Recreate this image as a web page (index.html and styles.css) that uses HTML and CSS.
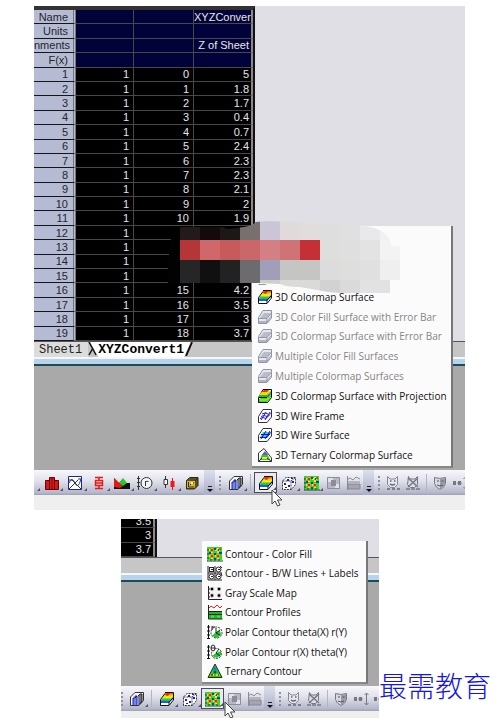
FILE: index.html
```
<!DOCTYPE html>
<html lang="en">
<head>
<meta charset="utf-8">
<title>Worksheet plot menus</title>
<link rel="stylesheet" href="styles.css">
</head>
<body>
<svg class="sprite" aria-hidden="true">
  <defs>
    <linearGradient id="rainbow" x1="0" y1="0" x2="0" y2="1">
      <stop offset="0" stop-color="#f04a10"/><stop offset=".3" stop-color="#ffc800"/><stop offset=".55" stop-color="#f4f400"/><stop offset=".8" stop-color="#28d428"/><stop offset="1" stop-color="#10b0a8"/>
    </linearGradient>
  </defs>
  <symbol id="i-surface" viewBox="0 0 16 16"><path d="M1 9 6 2h9v7l-5 5H1z" fill="#fff"/><path d="M2 9l4-7h8v4l-4 4H2z" fill="url(#rainbow)"/><path d="M6 4l2-2h3L9 5z" fill="#e82810"/><path d="M2 10h8l4-4v2l-4 4H2z" fill="#2058e8"/><path d="M1.500 8.500 6 2.500M6 1.500h8.500v7.500L10 14.500H1.500v-6" fill="none" stroke="#111"/><path d="M10 14v-3L14 7" fill="none" stroke="#111"/></symbol>
  <symbol id="i-surface-off" viewBox="0 0 16 16"><path d="M1.500 8.500 6 1.500h8.500V9L10 14.500H1.500z" fill="#e6e7ee" stroke="#9194a0"/><path d="M3 9l4-5h7l-4 5z" fill="#b9bdca"/><path d="M2 12h8l4-5v2l-4 5H2z" fill="#b0b4c2"/><path d="M2 9.500h8l4-5M10 10v4" fill="none" stroke="#9296a4"/></symbol>
  <symbol id="i-projection" viewBox="0 0 16 16"><path d="M1.500 9.500 6 1.500h8.500v8L10.500 14.500h-9z" fill="#fff" stroke="#000"/><path d="M2 7l4-4.500h8L10 7z" fill="#f8d800"/><path d="M4 4l3-2h5l-2 2z" fill="#f03010"/><path d="M2 7h8l4-4v2l-4 4H2z" fill="#20c030"/><path d="M2 11l2-1h6l4-3v2l-4 5H2z" fill="#28e028"/><path d="M3 12h6l3-2" stroke="#f0e000" fill="none"/><path d="M2 9.500h8l4-4" stroke="#000" fill="none"/></symbol>
  <symbol id="i-wire" viewBox="0 0 16 16"><path d="M1.500 8.500 6 1.500h8.500V9L10 14.500H1.500z" fill="#fff" stroke="#333"/><path d="M3 10.500l3-1 3 1 4-4M4 8.500l3-1 3 1 4-4M5 6l3-1 3 1M4 12l5-8M8 12l5-8" fill="none" stroke="#2820e0"/></symbol>
  <symbol id="i-wiresurf" viewBox="0 0 16 16"><path d="M1.500 8.500 6 1.500h8.500V9L10 14.500H1.500z" fill="#fff" stroke="#333"/><path d="M2.500 11 6 5h8l-4 6z" fill="#48c0e8"/><path d="M3 10.500h7l3.500-5M4 7.500h9M4 12l5-8M8 12l5-8" fill="none" stroke="#1018b0"/></symbol>
  <symbol id="i-ternary3d" viewBox="0 0 16 16"><path d="M1.500 14.500V6L7 1.500 14.500 11v3.500z" fill="#fff" stroke="#333"/><path d="M3 13q1-6 5-8 3 2 5 8z" fill="#22d030"/><path d="M5 8l3-4 3 4z" fill="#9040e0"/><path d="M5 10h5l2 2H4z" fill="#e8e820"/><path d="M1.500 14.500 5 11M14.500 14.500 10 11" stroke="#222" fill="none"/></symbol>
  <symbol id="i-scatter" viewBox="0 0 16 16"><path d="M1.500 6 5 2.500h9.500v7L10.500 14.500h-9z" fill="#fff"/><path d="M1.500 14.500V6L5 2.500h9.500v7L10.500 14.500zM1.500 6h8.500v8M10 6l4-3" fill="none" stroke="#333" stroke-dasharray="2 1"/><path d="M3 8h2v2H3zM7 10h2v2H7zM6 4h2v2H6zM11 6h2v2h-2zM10 3h2v1h-2zM4 12h2v1H4z" fill="#1818e0"/></symbol>
  <symbol id="i-bars3d" viewBox="0 0 16 16"><path d="M1.500 6 6 1.500h8.500v8L10 14.500H1.500z" fill="#f4f4fb" stroke="#333"/><path d="M4 14V7h2V5h2v9M10 14V5l2-2v8" fill="#7184f0" stroke="#1822b4"/><path d="M6 7l2-2M9 5l2-2h2v7l-2 3" fill="#777" stroke="#222"/></symbol>
  <symbol id="i-contour" viewBox="0 0 16 16"><path d="M1 1h14v13H1z" fill="#28e020"/><path d="M0 1v14h16M0 4h2M0 8h2M0 12h2M4 15v-2M8 15v-2M12 15v-2" stroke="#174d17" fill="none"/><path d="M2 4h12M2 10h12M5 2v12M11 2v12" stroke="#f0e820" stroke-width="2" stroke-dasharray="2 1"/><g fill="#f02018"><circle cx="5" cy="4" r="1.600"/><circle cx="11" cy="10" r="1.600"/><circle cx="5" cy="10" r="1.600"/><circle cx="13" cy="3" r="1"/></g><path d="M8 2v2M8 7v2M8 12v2M2 7h2M12 7h3M11 4h1" stroke="#1838e0" stroke-width="2"/></symbol>
  <symbol id="i-bw" viewBox="0 0 16 16"><path d="M1 1h14v13H1z" fill="#fff"/><path d="M1 1v14h14M1 8h14M8 1v14" stroke="#222" fill="none"/><g fill="none" stroke="#222"><rect x="2.500" y="2.500" width="4" height="4"/><circle cx="11.500" cy="4.500" r="2.500"/><circle cx="4.500" cy="11.500" r="2.500"/><circle cx="11.500" cy="11.500" r="2.500"/><path d="M4 4.500h2M11 4.500h2M4 11.500h2M11 11.500h2M13 1l2 2M14 8l1 3"/></g></symbol>
  <symbol id="i-gray" viewBox="0 0 16 16"><path d="M1 2h14v12H1z" fill="#f4f4f4"/><path d="M1.500 1v13.500H15M1 4h2M1 8h2M1 12h2M4 14v1M8 14v1M12 14v1" stroke="#222" fill="none"/><g fill="#999"><circle cx="5" cy="4" r="2"/><circle cx="12" cy="4" r="2"/><circle cx="5" cy="10.500" r="2"/><circle cx="12" cy="10.500" r="2"/></g><path d="M4 4h2M11 4h2M4 10.500h2M11 10.500h2" stroke="#000" stroke-width="2"/></symbol>
  <symbol id="i-profiles" viewBox="0 0 16 16"><path d="M1 5l3-3 3 2 3-3 3 3 2-2" stroke="#e82020" fill="none"/><path d="M1 7h14v8H1z" fill="#20b828"/><path d="M1.500 1v14h14M1 7.500h14M2 10.500h13" stroke="#222" fill="none"/><path d="M4 12.500h3M10 12.500h3" stroke="#38f038" stroke-width="2"/></symbol>
  <symbol id="i-polar1" viewBox="0 0 16 16"><path d="M1.500 1v14M0 3h3M0 7h3M0 11h3M0 14.500h3" stroke="#111" fill="none"/><circle cx="9.500" cy="8.500" r="5.500" fill="#fff" stroke="#333" stroke-dasharray="2 1"/><path d="M9 8l4-2 1 5-4 3-5-2z" fill="#20c82c"/><path d="M5 2v4M5 3h3M9 4v5l4-3M9 9l4 2" stroke="#222" fill="none"/></symbol>
  <symbol id="i-polar2" viewBox="0 0 16 16"><path d="M1.500 1v14M0 3h3M0 7h3M0 11h3M0 14.500h3" stroke="#111" fill="none"/><circle cx="9.500" cy="9.500" r="5" fill="#fff" stroke="#333" stroke-dasharray="2 1"/><path d="M9 9l5-2v4l-4 3-5-2z" fill="#20c82c"/><ellipse cx="6" cy="4" rx="2" ry="3" fill="#fff" stroke="#222"/><path d="M4 4h4M9 9l3-4M9 9l4 3" stroke="#222" fill="none"/></symbol>
  <symbol id="i-ternary" viewBox="0 0 16 16"><path d="M8 1 1 14.500h14z" fill="#24cf28" stroke="#143a14"/><path d="M8 3l2 4H6z" fill="#2c70e8"/><path d="M4 11h3v2H3zM9 11h3l1 2H9z" fill="#f0d010"/><circle cx="8" cy="9" r="1.500" fill="#1838d0"/><path d="M4 12h2M11 12h1" stroke="#e02818" stroke-width="2"/></symbol>
  <symbol id="i-columns" viewBox="0 0 16 16"><path d="M1.500 5.500h4v9h-4zM5.500 2.500h5v12h-5zM10.500 5.500h4v9h-4z" fill="#d81818" stroke="#5c0606"/><path d="M8 3v11" stroke="#8c0808"/></symbol>
  <symbol id="i-curve" viewBox="0 0 16 16"><path d="M1.500 1.500h13v13h-13z" fill="#fff" stroke="#1c2890"/><path d="M2 8q3-7 6 0t6-4" fill="none" stroke="#2030e0"/><path d="M2 14 11 5M5 5l9 9M2 5h3M11 4h3" stroke="#333" fill="none"/></symbol>
  <symbol id="i-box" viewBox="0 0 16 16"><path d="M4 2.500h8M8 2v3M4.500 5.500h7v5h-7zM4 8h8M8 10v4M4 13.500h8" fill="#ffd8d8" stroke="#e01c1c" stroke-width="1.500"/></symbol>
  <symbol id="i-area" viewBox="0 0 16 16"><path d="M0 14V3l5 5 3-3 3 3h5v6z" fill="#111"/><path d="M0 3l5 5 4 3-3 2-6-1z" fill="#e81818"/><path d="M5 8l4-5 4 5-4 3z" fill="#28c828"/></symbol>
  <symbol id="i-polar-r" viewBox="0 0 16 16"><path d="M1.500 1v14M0 3.500h3M0 7.500h3M0 11.500h3" stroke="#333" fill="none"/><circle cx="9.500" cy="8" r="5.500" fill="#f4f4fb" stroke="#333"/><path d="M8.500 11V6M8.500 7.500q1-2 3-1" stroke="#333" fill="none"/></symbol>
  <symbol id="i-candle" viewBox="0 0 16 16"><path d="M4.500 1v3M4.500 9v4M3 4.500h3.500v5H3z" fill="#fff" stroke="#333"/><path d="M11.500 3v12" stroke="#e01818"/><path d="M9.500 6h4v6h-4z" fill="#f01818"/></symbol>
  <symbol id="i-template" viewBox="0 0 16 16"><path d="M2.500 5.500 6 2.500h8v8l-3.500 3.500h-8z" fill="#58502c" stroke="#2c2814"/><path d="M3 6h8v7H3z" fill="#d8b830"/><path d="M11 6l3-3M4.500 7v5M4.500 12h6M6 10l2-2h2" stroke="#382c08" fill="none"/><path d="M7 7h2v2H7z" fill="#fff080"/></symbol>
  <symbol id="i-image-off" viewBox="0 0 16 16"><path d="M2.500 2.500h12v11h-12z" fill="#b8b9c4" stroke="#8c8d98"/><path d="M3 3h5v4H3zM10 9h4v4h-4z" fill="#e2e3ea"/><path d="M6 5h5v6H6z" fill="#8c8d98"/></symbol>
  <symbol id="i-profile-off" viewBox="0 0 16 16"><path d="M2 5l3-2 3 2 3-3 4 2M2 7h13M2.500 1v14" stroke="#8a8b96" fill="none"/><path d="M3 9h12v5H3z" fill="#a4a5b0" stroke="#858691"/></symbol>
  <symbol id="i-mask" viewBox="0 0 16 16"><path d="M2.500 1.500 5 4h5l2.500-2.500v8l-3 3h-4l-3-3z" fill="#e6e7ee" stroke="#888995"/><path d="M5 6h1.500M9 6h1.500M5 9q2.500 2 5 0M2 14h3M7 14h3M12 14h3" stroke="#666773" fill="none" stroke-width="1.500"/></symbol>
  <symbol id="i-unmask" viewBox="0 0 16 16"><path d="M3.500 1.500 5 4h5l2.500-2.500v8l-3 3h-4l-3-3z" fill="#dcdde5" stroke="#777884"/><path d="M3 3l10 9M13 3 3 12M1 14h4M6 14h4M11 14h4" stroke="#777884" fill="none" stroke-width="1.500"/></symbol>
  <symbol id="i-shield" viewBox="0 0 16 16"><path d="M2.500 2.500q5 2 11 0v6q-1 4-5.500 6-4.500-2-5.500-6z" fill="#d6d7df" stroke="#777884"/><path d="M8 3.500q3 0 5-.5v6q-1 3-5 5z" fill="#9a9ba7"/><path d="M5 6h2M9.500 6h2M5 10q3 2 6 0" stroke="#555662" fill="none"/></symbol>
  <symbol id="i-nodes" viewBox="0 0 16 16"><path d="M2 8h9" stroke="#888995" stroke-dasharray="2 1"/><path d="M1 6h3v4H1zM6 6h3v4H6z" fill="#777884"/><path d="M13.500 2v12M11.500 4l2-2 2 2M11.500 12l2 2 2-2" stroke="#777884" fill="none"/></symbol>
  <symbol id="i-cursor" viewBox="0 0 12 18"><path d="M1 1v14l3-3 2.500 5 2.500-1-2.500-5H11z" fill="#fff" stroke="#444"/></symbol>
</svg>

<main class="page">
  <section class="shot shot-main">
    <div class="sheet">
      <table class="grid">
        <colgroup><col class="c-head"><col class="c-a"><col class="c-b"><col class="c-c"></colgroup>
        <tbody>
        <tr class="meta"><th scope="row">Name</th><td></td><td></td><td>XYZConver</td></tr>
        <tr class="meta"><th scope="row">Units</th><td></td><td></td><td></td></tr>
        <tr class="meta"><th scope="row">nments</th><td></td><td></td><td>Z of Sheet</td></tr>
        <tr class="meta"><th scope="row">F(x)</th><td></td><td></td><td></td></tr>
        <tr><th scope="row">1</th><td>1</td><td>0</td><td>5</td></tr>
        <tr><th scope="row">2</th><td>1</td><td>1</td><td>1.8</td></tr>
        <tr><th scope="row">3</th><td>1</td><td>2</td><td>1.7</td></tr>
        <tr><th scope="row">4</th><td>1</td><td>3</td><td>0.4</td></tr>
        <tr><th scope="row">5</th><td>1</td><td>4</td><td>0.7</td></tr>
        <tr><th scope="row">6</th><td>1</td><td>5</td><td>2.4</td></tr>
        <tr><th scope="row">7</th><td>1</td><td>6</td><td>2.3</td></tr>
        <tr><th scope="row">8</th><td>1</td><td>7</td><td>2.3</td></tr>
        <tr><th scope="row">9</th><td>1</td><td>8</td><td>2.1</td></tr>
        <tr><th scope="row">10</th><td>1</td><td>9</td><td>2</td></tr>
        <tr><th scope="row">11</th><td>1</td><td>10</td><td>1.9</td></tr>
        <tr><th scope="row">12</th><td>1</td><td></td><td></td></tr>
        <tr><th scope="row">13</th><td>1</td><td></td><td></td></tr>
        <tr><th scope="row">14</th><td>1</td><td></td><td></td></tr>
        <tr><th scope="row">15</th><td>1</td><td></td><td></td></tr>
        <tr><th scope="row">16</th><td>1</td><td>15</td><td>4.2</td></tr>
        <tr><th scope="row">17</th><td>1</td><td>16</td><td>3.5</td></tr>
        <tr><th scope="row">18</th><td>1</td><td>17</td><td>3</td></tr>
        <tr><th scope="row">19</th><td>1</td><td>18</td><td>3.7</td></tr>
        </tbody>
      </table>
    </div>
    <div class="tabs">
      <button class="tab">Sheet1</button>
      <svg class="slant" viewBox="0 0 10 14"><path d="M2 0h8v14z" fill="#fff"/><path d="M1 0l7 13M5 6l-4 7" stroke="#111" fill="none" stroke-width="1.500"/></svg>
      <button class="tab active">XYZConvert1</button>
      <svg class="slant" viewBox="0 0 10 14"><path d="M0 0h9L3 14H0z" fill="#fff"/><path d="M8 0 2 14" stroke="#111" fill="none" stroke-width="2"/></svg>
    </div>
    <div class="band"></div>
    <div class="workspace"></div>
    <div class="toolbar">
      <span class="stub"></span>
      <div class="group">
        <button class="tool drop" aria-label="Column"><svg><use href="#i-columns"/></svg></button>
        <button class="tool drop" aria-label="Curve"><svg><use href="#i-curve"/></svg></button>
        <button class="tool drop" aria-label="Box"><svg><use href="#i-box"/></svg></button>
        <button class="tool drop" aria-label="Area"><svg><use href="#i-area"/></svg></button>
        <button class="tool drop" aria-label="Polar"><svg><use href="#i-polar-r"/></svg></button>
        <button class="tool drop" aria-label="Stock"><svg><use href="#i-candle"/></svg></button>
        <button class="tool" aria-label="Template"><svg><use href="#i-template"/></svg></button>
      </div>
      <button class="cap" aria-label="More"></button>
      <span class="grip"></span>
      <button class="tool drop" aria-label="3D bars"><svg><use href="#i-bars3d"/></svg></button>
      <span class="sep"></span>
      <button class="tool drop selected" aria-label="3D surface"><svg><use href="#i-surface"/></svg></button>
      <button class="tool drop" aria-label="3D scatter"><svg><use href="#i-scatter"/></svg></button>
      <button class="tool drop" aria-label="Contour"><svg><use href="#i-contour"/></svg></button>
      <button class="tool narrow" aria-label="Image"><svg><use href="#i-image-off"/></svg></button>
      <button class="tool narrow" aria-label="Profile"><svg><use href="#i-profile-off"/></svg></button>
      <button class="cap" aria-label="More"></button>
      <span class="grip"></span>
      <button class="tool narrow" aria-label="Mask"><svg><use href="#i-mask"/></svg></button>
      <button class="tool narrow" aria-label="Unmask"><svg><use href="#i-unmask"/></svg></button>
      <span class="sep"></span>
      <button class="tool narrow" aria-label="Swap mask"><svg><use href="#i-shield"/></svg></button>
      <button class="tool narrow" aria-label="Nodes"><svg><use href="#i-nodes"/></svg></button>
    </div>
    <div class="status"></div>

    <ul class="menu menu-surface">
      <li><button><svg><use href="#i-surface"/></svg>3D Colormap Surface</button></li>
      <li><button disabled><svg><use href="#i-surface-off"/></svg>3D Color Fill Surface with Error Bar</button></li>
      <li><button disabled><svg><use href="#i-surface-off"/></svg>3D Colormap Surface with Error Bar</button></li>
      <li><button disabled><svg><use href="#i-surface-off"/></svg>Multiple Color Fill Surfaces</button></li>
      <li><button disabled><svg><use href="#i-surface-off"/></svg>Multiple Colormap Surfaces</button></li>
      <li><button><svg><use href="#i-projection"/></svg>3D Colormap Surface with Projection</button></li>
      <li><button><svg><use href="#i-wire"/></svg>3D Wire Frame</button></li>
      <li><button><svg><use href="#i-wiresurf"/></svg>3D Wire Surface</button></li>
      <li><button><svg><use href="#i-ternary3d"/></svg>3D Ternary Colormap Surface</button></li>
    </ul>

    <svg class="mosaic" viewBox="168 220 234 76" aria-hidden="true">
      <clipPath id="blob"><path d="M168 283V262L171 238Q173 228 182 227H222L228 229 244 227Q252 226 256 222L268 221 350 225Q382 225 390 240L391 246H400V280H390V293H340L328 292 300 287Q286 287 280 284L258 283H250V283z"/></clipPath>
      <g clip-path="url(#blob)" shape-rendering="crispEdges">
        <path d="M168 220h12v76h-12z" fill="#020202"/>
        <path d="M180 220h20v20h-20z" fill="#231a1c"/><path d="M200 220h20v20h-20z" fill="#120a0c"/><path d="M220 220h20v20h-20z" fill="#1c1818"/><path d="M240 220h20v20h-20z" fill="#77706f"/><path d="M260 220h20v20h-20z" fill="#cbc5d8"/><path d="M280 220h20v20h-20z" fill="#e0dada"/><path d="M300 220h20v20h-20z" fill="#e2dddd"/><path d="M320 220h20v20h-20z" fill="#dedede"/><path d="M340 220h20v20h-20z" fill="#e0e0e0"/><path d="M360 220h20v20h-20z" fill="#e9e9eb"/><path d="M380 220h20v20h-20z" fill="#f1f1f1"/>
        <path d="M180 240h20v20h-20z" fill="#b53638"/><path d="M200 240h20v20h-20z" fill="#d0676b"/><path d="M220 240h20v20h-20z" fill="#c75a5a"/><path d="M240 240h20v20h-20z" fill="#cb666a"/><path d="M260 240h20v20h-20z" fill="#d37f83"/><path d="M280 240h20v20h-20z" fill="#cf7377"/><path d="M300 240h20v20h-20z" fill="#c43036"/><path d="M320 240h20v20h-20z" fill="#dedfdd"/><path d="M340 240h20v20h-20z" fill="#dfdfdf"/><path d="M360 240h20v20h-20z" fill="#e3e3e3"/><path d="M380 240h20v20h-20z" fill="#f3f3f3"/>
        <path d="M180 260h20v24h-20z" fill="#262626"/><path d="M200 260h20v24h-20z" fill="#101010"/><path d="M220 260h20v24h-20z" fill="#222"/><path d="M240 260h20v24h-20z" fill="#6c6b6e"/><path d="M260 260h20v20h-20z" fill="#a19eb9"/><path d="M280 260h40v20h-40z" fill="#c5c5c4"/><path d="M320 260h20v20h-20z" fill="#dcdcdc"/><path d="M340 260h20v20h-20z" fill="#dededd"/><path d="M360 260h20v20h-20z" fill="#e0e0e0"/><path d="M380 260h20v20h-20z" fill="#efefef"/>
        <path d="M260 280h20v16h-20z" fill="#ccd0c6"/><path d="M280 280h40v16h-40z" fill="#dadada"/><path d="M320 280h20v16h-20z" fill="#d2d2d2"/><path d="M340 280h20v16h-20z" fill="#dadada"/><path d="M360 280h40v16h-40z" fill="#e2e2e2"/>
      </g>
      <path d="M259 284h8l-2 1h-7z" fill="#8f93c0"/>
    </svg>
    <svg class="cursor cursor-main"><use href="#i-cursor"/></svg>
  </section>

  <div class="lower">
    <section class="shot shot-contour">
      <div class="sheet short">
        <table class="grid tail">
          <tbody>
          <tr><td>3.5</td></tr>
          <tr><td>3</td></tr>
          <tr><td>3.7</td></tr>
          </tbody>
        </table>
      </div>
      <div class="tabs"></div>
      <div class="band"></div>
      <div class="workspace"></div>
      <div class="toolbar">
        <span class="grip slim"></span>
        <button class="tool drop" aria-label="3D bars"><svg><use href="#i-bars3d"/></svg></button>
        <span class="sep"></span>
        <button class="tool drop" aria-label="3D surface"><svg><use href="#i-surface"/></svg></button>
        <button class="tool drop" aria-label="3D scatter"><svg><use href="#i-scatter"/></svg></button>
        <button class="tool drop selected" aria-label="Contour"><svg><use href="#i-contour"/></svg></button>
        <button class="tool narrow" aria-label="Image"><svg><use href="#i-image-off"/></svg></button>
        <button class="tool narrow" aria-label="Profile"><svg><use href="#i-profile-off"/></svg></button>
        <button class="cap" aria-label="More"></button>
        <span class="grip"></span>
        <button class="tool narrow" aria-label="Mask"><svg><use href="#i-mask"/></svg></button>
        <button class="tool narrow" aria-label="Unmask"><svg><use href="#i-unmask"/></svg></button>
        <span class="sep"></span>
        <button class="tool narrow" aria-label="Swap mask"><svg><use href="#i-shield"/></svg></button>
        <button class="tool narrow" aria-label="Nodes"><svg><use href="#i-nodes"/></svg></button>
        <button class="tool narrow" aria-label="Nodes"><svg><use href="#i-nodes"/></svg></button>
      </div>
      <div class="status"></div>

      <ul class="menu menu-contour">
        <li><button><svg><use href="#i-contour"/></svg>Contour - Color Fill</button></li>
        <li><button><svg><use href="#i-bw"/></svg>Contour - B/W Lines + Labels</button></li>
        <li><button><svg><use href="#i-gray"/></svg>Gray Scale Map</button></li>
        <li><button><svg><use href="#i-profiles"/></svg>Contour Profiles</button></li>
        <li><button><svg><use href="#i-polar1"/></svg>Polar Contour theta(X) r(Y)</button></li>
        <li><button><svg><use href="#i-polar2"/></svg>Polar Contour r(X) theta(Y)</button></li>
        <li><button><svg><use href="#i-ternary"/></svg>Ternary Contour</button></li>
      </ul>
      <svg class="cursor cursor-contour"><use href="#i-cursor"/></svg>
    </section>
    <p class="brand" lang="zh-CN">最需教育</p>
  </div>
</main>
</body>
</html>
```
FILE: styles.css
```
* { box-sizing: border-box; }
body { margin: 0; background: #fff; font-family: "Liberation Sans", Arial, sans-serif; }
button { margin: 0; padding: 0; border: 0; background: none; font: inherit; color: inherit; }
.sprite { position: absolute; width: 0; height: 0; }

.page { padding: 6px 0 0; }
.shot { position: relative; display: flex; flex-direction: column; }
.shot-main { margin: 0 36px 0 34px; }
.lower { display: grid; grid-template-columns: 121px minmax(0, 258px) auto; margin-top: 9px; }
.shot-contour { grid-column: 2; }

/* worksheet */
.sheet { display: flex; align-items: flex-end; height: 336px; background: #e0dfe5; border-bottom: 1px solid #555; }
.sheet.short { height: 39px; overflow: hidden; }
.grid {
  table-layout: fixed; border-collapse: separate; border-spacing: 0;
  width: 221px; height: 335px; background: #000;
  border-top: 4px solid #333; border-right: 2px solid #111;
  font-size: 11px; line-height: 12px; color: #e6e6e6;
}
.c-head { width: 42px; }
.c-a { width: 58px; }
.c-b { width: 60px; }
.grid th, .grid td { padding: 0; text-align: right; font-weight: 400; white-space: nowrap; border-bottom: 1px solid #484848; }
.grid td { border-right: 1px solid #484848; padding-right: 4px; }
.grid td:last-child { border-right: 2px solid #8a8a8a; padding-right: 2px; }
.grid th { background: #b4bbd3; color: #26262e; padding-right: 5px; border-bottom-color: #15151c; border-right: 3px double #777; }
.grid .meta td { background: #02023a; }
.grid.tail { flex: none; width: 36px; height: 43px; border-top: 0; }

/* sheet tabs */
.tabs { display: flex; height: 15px; background: #c6c6c6; font-family: "Liberation Mono", "Courier New", monospace; line-height: 14px; }
.tab { padding: 0 6px 0 5px; font-size: 12px; color: #222; background: #dcdcdc; }
.tab.active { padding: 0; font-size: 13px; font-weight: 700; color: #000; background: #fff; }
.slant { width: 10px; height: 14px; flex: none; }
.band { height: 9px; background: #b7d4ec; border-top: 2px solid #f4f8fb; border-bottom: 2px solid #1c4a56; }
.workspace { height: 104px; background: #a9a9a9; }

/* toolbar */
.toolbar {
  display: flex; align-items: center; height: 25px; overflow: hidden;
  background: linear-gradient(#f7f7fb, #dfe0ea 45%, #b6b8cc 90%, #9fa1b5);
}
.status { height: 15px; background: #efefef; }
.shot-contour .status { height: 7px; }
.stub { flex: none; width: 6px; }
.group { display: flex; flex: none; width: 164px; }
.group .tool { flex: 1; }
.tool { position: relative; flex: none; display: flex; align-items: center; justify-content: center; width: 23px; height: 21px; }
.tool.narrow { width: 20px; }
.tool svg { width: 16px; height: 16px; flex: none; }
.tool.selected { border: 1px solid #4c4c58; background: #e9e9f0; }
.tool.drop::after, .stub::after {
  content: ""; position: absolute; right: 0; bottom: 2px;
  border-left: 3px solid transparent; border-bottom: 3px solid #555;
}
.stub { position: relative; height: 21px; }
.stub::after { right: 0; }
.cap {
  flex: none; width: 11px; height: 25px; border-radius: 0 0 4px 0;
  background: linear-gradient(#dcdfec, #a9adc6); position: relative;
}
.cap::before { content: ""; position: absolute; left: 4px; right: 3px; bottom: 8px; border-top: 1px solid #222; }
.cap::after { content: ""; position: absolute; left: 3px; bottom: 3px; border: 3px solid transparent; border-top-color: #111; border-bottom: 0; }
.grip { flex: none; width: 2px; height: 14px; margin: 0 3px 0 4px; background: repeating-linear-gradient(#8e90a2 0 2px, transparent 2px 4px); }
.grip.slim { margin: 0 2px 0 0; }
.sep { flex: none; width: 1px; height: 17px; margin: 0 3px; background: #b2b4c6; }

/* popup menus */
.menu {
  position: absolute; margin: 0; padding: 3px 0 1px; list-style: none;
  display: grid; grid-auto-rows: 1fr; background: #fbfbfb;
  border-right: 2px solid #777; border-bottom: 2px solid #888;
  font-family: "Open Sans", "Noto Sans", sans-serif; font-size: 10px; font-weight: 500; color: #111;
}
.menu button { display: flex; align-items: center; gap: 2px; width: 100%; height: 100%; padding-left: 5px; white-space: nowrap; text-align: left; }
.menu button:disabled { color: #858585; }
.menu svg { flex: none; width: 16px; height: 16px; }
.menu-surface { left: 218px; top: 220px; width: 201px; height: 242px; padding-top: 61px; }
.menu-contour { left: 81px; top: 22px; width: 166px; height: 143px; }
.mosaic { position: absolute; left: 134px; top: 214px; width: 234px; height: 76px; }
.cursor { position: absolute; width: 12px; height: 18px; }
.cursor-main { left: 237px; top: 483px; }
.cursor-contour { left: 103px; top: 182px; }

.brand {
  align-self: end; margin: 0 0 13px; white-space: nowrap;
  font-family: "Noto Sans CJK SC", sans-serif; font-weight: 300;
  font-size: 28px; line-height: 40px; color: #1414e6;
}
```
